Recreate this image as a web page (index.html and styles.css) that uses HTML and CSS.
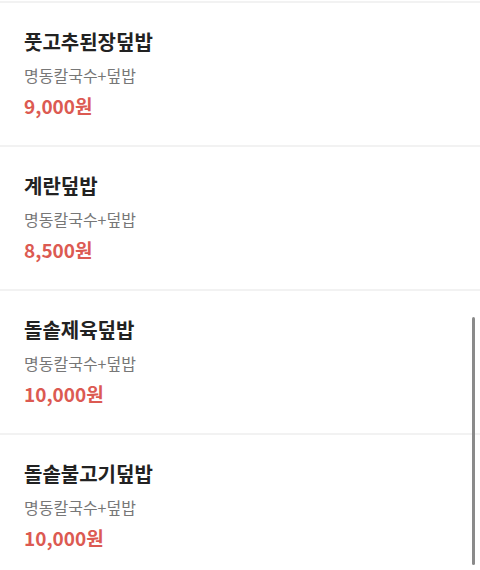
FILE: index.html
```html
<!DOCTYPE html>
<html lang="ko">
<head>
<meta charset="utf-8">
<link rel="stylesheet" href="styles.css">
</head>
<body>
<div class="list">
  <div class="item">
    <div class="name">풋고추된장덮밥</div>
    <div class="shop">명동칼국수+덮밥</div>
    <div class="price">9,000원</div>
  </div>
  <div class="item">
    <div class="name">계란덮밥</div>
    <div class="shop">명동칼국수+덮밥</div>
    <div class="price">8,500원</div>
  </div>
  <div class="item">
    <div class="name">돌솥제육덮밥</div>
    <div class="shop">명동칼국수+덮밥</div>
    <div class="price">10,000원</div>
  </div>
  <div class="item">
    <div class="name">돌솥불고기덮밥</div>
    <div class="shop">명동칼국수+덮밥</div>
    <div class="price">10,000원</div>
  </div>
</div>
<div class="scrollbar"></div>
</body>
</html>
```

FILE: styles.css
```css
html, body {
  margin: 0;
  padding: 0;
  background: #ffffff;
  height: 570px;
  overflow: hidden;
}
body {
  font-family: "Noto Sans CJK KR", "Noto Sans", sans-serif;
  position: relative;
}
.list {
  display: flex;
  flex-direction: column;
  border-top: 2px solid #f2f2f2;
  margin-top: 1px;
}
.item {
  height: 144px;
  flex-shrink: 0;
  box-sizing: border-box;
  padding: 25px 24px 0;
  border-bottom: 2px solid #f2f2f2;
  display: flex;
  flex-direction: column;
}
.name {
  font-size: 20px;
  font-weight: 700;
  color: #222222;
  line-height: 28px;
}
.shop {
  font-size: 16px;
  color: #777777;
  line-height: 22px;
  margin-top: 8px;
}
.price {
  font-size: 19px;
  font-weight: 700;
  color: #dc5a52;
  line-height: 26px;
  margin-top: 7px;
}
.scrollbar {
  position: absolute;
  right: 5px;
  top: 317px;
  width: 3px;
  height: 248px;
  border-radius: 2px;
  background: #8a8a8a;
}
```
